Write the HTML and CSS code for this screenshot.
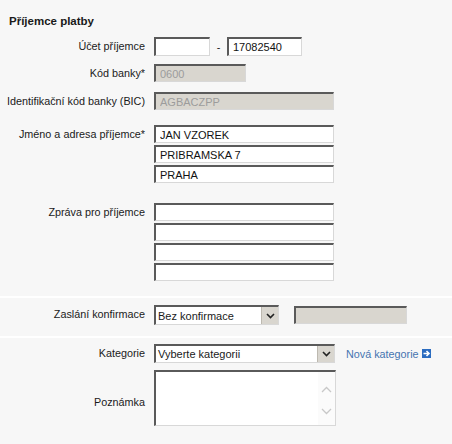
FILE: index.html
```html
<!DOCTYPE html>
<html lang="cs">
<head>
<meta charset="utf-8">
<title>Příjemce platby</title>
<link rel="stylesheet" href="styles.css">
</head>
<body>
<div class="page">
  <section class="sec sec-main">
    <h2 class="title">Příjemce platby</h2>
    <div class="row r-ucet">
      <label class="lbl">Účet příjemce</label>
      <div class="ctl inline">
        <input class="inp w-pre" type="text" value="">
        <span class="dash">-</span>
        <input class="inp w-num" type="text" value="17082540">
      </div>
    </div>
    <div class="row r-kod">
      <label class="lbl">Kód banky*</label>
      <div class="ctl"><input class="inp dis w-kod" type="text" value="0600" disabled></div>
    </div>
    <div class="row r-bic">
      <label class="lbl">Identifikační kód banky (BIC)</label>
      <div class="ctl"><input class="inp dis w-full" type="text" value="AGBACZPP" disabled></div>
    </div>
    <div class="row r-jmeno">
      <label class="lbl">Jméno a adresa příjemce*</label>
      <div class="ctl stack">
        <input class="inp w-full" type="text" value="JAN VZOREK">
        <input class="inp w-full" type="text" value="PRIBRAMSKA 7">
        <input class="inp w-full" type="text" value="PRAHA">
      </div>
    </div>
    <div class="row r-zprava">
      <label class="lbl">Zpráva pro příjemce</label>
      <div class="ctl stack">
        <input class="inp w-full" type="text" value="">
        <input class="inp w-full" type="text" value="">
        <input class="inp w-full" type="text" value="">
        <input class="inp w-full" type="text" value="">
      </div>
    </div>
  </section>
  <section class="sec sec-konf">
    <div class="row r-konf">
      <label class="lbl">Zaslání konfirmace</label>
      <div class="ctl inline">
        <div class="sel w-konf">
          <span class="sel-text">Bez konfirmace</span>
          <span class="sel-btn"><svg width="9" height="6" viewBox="0 0 9 6"><path d="M1 1 L4.5 4.5 L8 1" fill="none" stroke="#222" stroke-width="1.6"/></svg></span>
        </div>
        <input class="inp dis w-konf2" type="text" value="" disabled>
      </div>
    </div>
  </section>
  <section class="sec sec-kat">
    <div class="row r-kat">
      <label class="lbl">Kategorie</label>
      <div class="ctl inline">
        <div class="sel w-kat">
          <span class="sel-text">Vyberte kategorii</span>
          <span class="sel-btn"><svg width="9" height="6" viewBox="0 0 9 6"><path d="M1 1 L4.5 4.5 L8 1" fill="none" stroke="#222" stroke-width="1.6"/></svg></span>
        </div>
        <a class="link" href="#">Nová kategorie <span class="ico"><svg width="9" height="9" viewBox="0 0 9 9"><rect width="9" height="9" fill="#2b6cc0"/><path d="M1.5 4.5 H6.5 M4.5 2 L7 4.5 L4.5 7" fill="none" stroke="#fff" stroke-width="1.6"/></svg></span></a>
      </div>
    </div>
    <div class="row r-pozn">
      <label class="lbl">Poznámka</label>
      <div class="ctl">
        <div class="area">
          <textarea class="area-in"></textarea>
          <div class="scroll">
            <svg width="11" height="7" viewBox="0 0 11 7"><path d="M1 6 L5.5 1.5 L10 6" fill="none" stroke="#c8c8c8" stroke-width="1.3"/></svg>
            <svg width="11" height="7" viewBox="0 0 11 7"><path d="M1 1 L5.5 5.5 L10 1" fill="none" stroke="#c8c8c8" stroke-width="1.3"/></svg>
          </div>
        </div>
      </div>
    </div>
  </section>
</div>
</body>
</html>
```

FILE: styles.css
```css
html, body {
  margin: 0;
  padding: 0;
  background: #f7f7f7;
}
body {
  font-family: "Liberation Sans", Arial, sans-serif;
  font-size: 10.8px;
  color: #1a1a1a;
}
.page {
  width: 452px;
  height: 444px;
  overflow: hidden;
}
.sec {
  background: #f7f7f7;
}
.sec-main {
  padding: 14px 0 15px;
}
.sec-konf {
  border-top: 2px solid #ffffff;
  padding: 7px 0 11px;
}
.sec-kat {
  border-top: 2px solid #ffffff;
  padding: 6px 0 0;
}
.title {
  margin: 0 0 9px 9px;
  font-size: 11.5px;
  font-weight: bold;
  line-height: 14px;
}
.row {
  display: grid;
  grid-template-columns: 145px auto;
  column-gap: 9px;
  align-items: start;
}
.lbl {
  text-align: right;
  line-height: 19px;
  white-space: nowrap;
}
.ctl {
  display: flex;
  align-items: center;
}
.stack {
  flex-direction: column;
  align-items: flex-start;
  gap: 2px;
}
.stack .inp {
  height: 18px;
}
.r-jmeno .lbl, .r-zprava .lbl { line-height: 18px; }
.r-kod { margin-top: 8px; }
.r-bic { margin-top: 9px; }
.r-jmeno { margin-top: 14px; }
.r-zprava { margin-top: 20px; }
.r-pozn { margin-top: 7px; }

.inp {
  box-sizing: border-box;
  height: 19px;
  margin: 0;
  padding: 0 4px;
  font-family: "Liberation Sans", Arial, sans-serif;
  font-size: 11px;
  color: #111;
  background: #ffffff;
  border-style: solid;
  border-width: 2px 1px 1px 2px;
  border-color: #5a5a5a #d8d8d8 #d8d8d8 #5a5a5a;
  outline: none;
}
.dis {
  background: #d9d6cf;
  color: #9c9c9c;
  height: 18px;
}
.w-pre { width: 56px; }
.dash { width: 17px; text-align: center; }
.w-num { width: 75px; }
.w-kod { width: 92px; }
.w-full { width: 180px; }
.w-konf2 { width: 113px; margin-left: 15px; }

.sel {
  box-sizing: border-box;
  height: 20px;
  display: flex;
  align-items: center;
  background: #fff;
  border-style: solid;
  border-width: 2px 1px 1px 2px;
  border-color: #5a5a5a #d8d8d8 #d8d8d8 #5a5a5a;
  font-size: 11px;
}
.w-konf { width: 125px; }
.w-kat { width: 181px; height: 19px; }
.sel-text {
  flex: 1;
  padding-left: 2px;
  white-space: nowrap;
  overflow: hidden;
}
.sel-btn {
  box-sizing: border-box;
  width: 17px;
  height: 100%;
  display: flex;
  align-items: center;
  justify-content: center;
  background: #d9d6cf;
  border-left: 1px solid #bdb9b0;
}
.link {
  margin-left: 11px;
  color: #4574b0;
  text-decoration: none;
  font-size: 10.8px;
  display: inline-flex;
  align-items: center;
  gap: 3px;
}
.ico {
  display: inline-flex;
}
.area {
  box-sizing: border-box;
  width: 182px;
  height: 56px;
  display: flex;
  background: #fff;
  border-style: solid;
  border-width: 2px 1px 1px 2px;
  border-color: #5a5a5a #d8d8d8 #d8d8d8 #5a5a5a;
}
.area-in {
  flex: 1;
  border: 0;
  margin: 0;
  padding: 2px;
  resize: none;
  outline: none;
  background: #fff;
}
.scroll {
  width: 17px;
  display: flex;
  flex-direction: column;
  align-items: center;
  justify-content: space-between;
  padding: 14px 0 10px;
  background: #fbfbfb;
}
.r-pozn .lbl {
  line-height: 16px;
  padding-top: 24px;
}
```
